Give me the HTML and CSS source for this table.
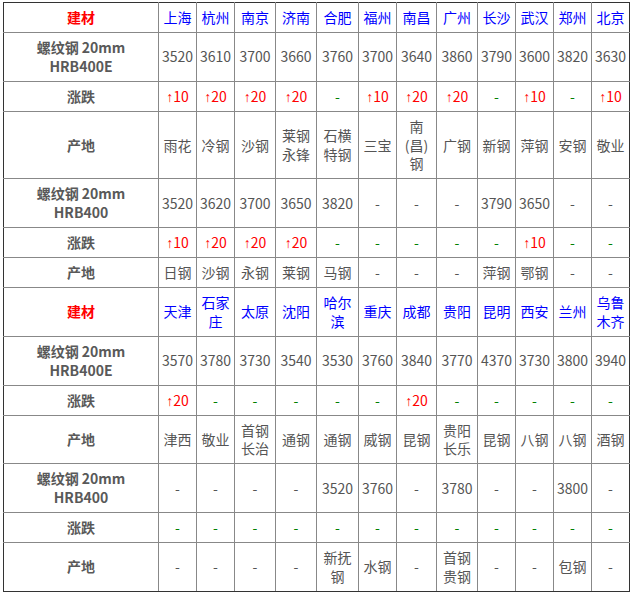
FILE: index.html
```html
<!DOCTYPE html>
<html lang="zh-CN">
<head>
<meta charset="utf-8">
<title>螺纹钢价格</title>
<link rel="stylesheet" href="styles.css">
</head>
<body>
<table class="price">
<colgroup>
<col class="c-lbl"><col class="c38"><col class="c38"><col class="c41"><col class="c41"><col class="c42"><col class="c38"><col class="c40"><col class="c41"><col class="c38"><col class="c38"><col class="c38"><col class="c38">
</colgroup>
<tbody>
<tr>
<td class="lbl red">建材</td>
<td class="city">上海</td><td class="city">杭州</td><td class="city">南京</td><td class="city">济南</td><td class="city">合肥</td><td class="city">福州</td><td class="city">南昌</td><td class="city">广州</td><td class="city">长沙</td><td class="city">武汉</td><td class="city">郑州</td><td class="city">北京</td>
</tr>
<tr>
<td class="lbl">螺纹钢 20mm<br>HRB400E</td>
<td>3520</td><td>3610</td><td>3700</td><td>3660</td><td>3760</td><td>3700</td><td>3640</td><td>3860</td><td>3790</td><td>3600</td><td>3820</td><td>3630</td>
</tr>
<tr>
<td class="lbl">涨跌</td>
<td class="rise"><span class="arr">↑</span>10</td><td class="rise"><span class="arr">↑</span>20</td><td class="rise"><span class="arr">↑</span>20</td><td class="rise"><span class="arr">↑</span>20</td><td class="flat">-</td><td class="rise"><span class="arr">↑</span>10</td><td class="rise"><span class="arr">↑</span>20</td><td class="rise"><span class="arr">↑</span>20</td><td class="flat">-</td><td class="rise"><span class="arr">↑</span>10</td><td class="flat">-</td><td class="rise"><span class="arr">↑</span>10</td>
</tr>
<tr>
<td class="lbl">产地</td>
<td>雨花</td><td>冷钢</td><td>沙钢</td><td>莱钢永锋</td><td>石横特钢</td><td>三宝</td><td>南(昌)钢</td><td>广钢</td><td>新钢</td><td>萍钢</td><td>安钢</td><td>敬业</td>
</tr>
<tr>
<td class="lbl">螺纹钢 20mm<br>HRB400</td>
<td>3520</td><td>3620</td><td>3700</td><td>3650</td><td>3820</td><td>-</td><td>-</td><td>-</td><td>3790</td><td>3650</td><td>-</td><td>-</td>
</tr>
<tr>
<td class="lbl">涨跌</td>
<td class="rise"><span class="arr">↑</span>10</td><td class="rise"><span class="arr">↑</span>20</td><td class="rise"><span class="arr">↑</span>20</td><td class="rise"><span class="arr">↑</span>20</td><td class="flat">-</td><td class="flat">-</td><td class="flat">-</td><td class="flat">-</td><td class="flat">-</td><td class="rise"><span class="arr">↑</span>10</td><td class="flat">-</td><td class="flat">-</td>
</tr>
<tr>
<td class="lbl">产地</td>
<td>日钢</td><td>沙钢</td><td>永钢</td><td>莱钢</td><td>马钢</td><td>-</td><td>-</td><td>-</td><td>萍钢</td><td>鄂钢</td><td>-</td><td>-</td>
</tr>
<tr>
<td class="lbl red">建材</td>
<td class="city">天津</td><td class="city">石家庄</td><td class="city">太原</td><td class="city">沈阳</td><td class="city">哈尔滨</td><td class="city">重庆</td><td class="city">成都</td><td class="city">贵阳</td><td class="city">昆明</td><td class="city">西安</td><td class="city">兰州</td><td class="city">乌鲁木齐</td>
</tr>
<tr>
<td class="lbl">螺纹钢 20mm<br>HRB400E</td>
<td>3570</td><td>3780</td><td>3730</td><td>3540</td><td>3530</td><td>3760</td><td>3840</td><td>3770</td><td>4370</td><td>3730</td><td>3800</td><td>3940</td>
</tr>
<tr>
<td class="lbl">涨跌</td>
<td class="rise"><span class="arr">↑</span>20</td><td class="flat">-</td><td class="flat">-</td><td class="flat">-</td><td class="flat">-</td><td class="flat">-</td><td class="rise"><span class="arr">↑</span>20</td><td class="flat">-</td><td class="flat">-</td><td class="flat">-</td><td class="flat">-</td><td class="flat">-</td>
</tr>
<tr>
<td class="lbl">产地</td>
<td>津西</td><td>敬业</td><td>首钢长治</td><td>通钢</td><td>通钢</td><td>威钢</td><td>昆钢</td><td>贵阳长乐</td><td>昆钢</td><td>八钢</td><td>八钢</td><td>酒钢</td>
</tr>
<tr>
<td class="lbl">螺纹钢 20mm<br>HRB400</td>
<td>-</td><td>-</td><td>-</td><td>-</td><td>3520</td><td>3760</td><td>-</td><td>3780</td><td>-</td><td>-</td><td>3800</td><td>-</td>
</tr>
<tr>
<td class="lbl">涨跌</td>
<td class="flat">-</td><td class="flat">-</td><td class="flat">-</td><td class="flat">-</td><td class="flat">-</td><td class="flat">-</td><td class="flat">-</td><td class="flat">-</td><td class="flat">-</td><td class="flat">-</td><td class="flat">-</td><td class="flat">-</td>
</tr>
<tr>
<td class="lbl">产地</td>
<td>-</td><td>-</td><td>-</td><td>-</td><td>新抚钢</td><td>水钢</td><td>-</td><td>首钢贵钢</td><td>-</td><td>-</td><td>包钢</td><td>-</td>
</tr>
</tbody>
</table>
</body>
</html>
```

FILE: styles.css
```css
html, body {
  margin: 0;
  padding: 0;
  background: #fff;
}

.price {
  margin: 2px 0 0 3px;
  width: 627px;
  table-layout: fixed;
  border-collapse: collapse;
  font-family: "Noto Sans CJK SC", "Noto Sans", sans-serif;
  font-size: 14px;
  line-height: 18.9px;
  color: #555;
}

.c-lbl { width: 155px; }
.c38 { width: 38px; }
.c40 { width: 40px; }
.c41 { width: 41px; }
.c42 { width: 42px; }

.price td {
  border: 1px solid #888;
  padding: 5px 3px;
  text-align: center;
  vertical-align: middle;
  word-break: normal;
}

.price tr:first-child td { border-top-color: #333; }
.price tr:last-child td { border-bottom-color: #333; }
.price td:first-child { border-left-color: #333; }
.price td:last-child { border-right-color: #333; }

.lbl {
  font-weight: bold;
  color: #595959;
}

.red { color: #f00; }

.city { color: #00f; }

.rise { color: #f00; }

.arr {
  font-family: "Liberation Sans", sans-serif;
  line-height: 14px;
}

.flat { color: #008000; }
```
